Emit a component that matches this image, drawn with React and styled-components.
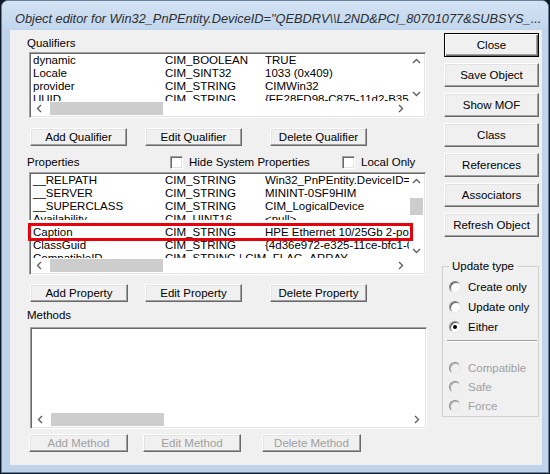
import React from "react";
import styled, { createGlobalStyle } from "styled-components";

const GlobalStyle = createGlobalStyle`
  html, body {
    margin: 0;
    padding: 0;
    background: #0f1b2b;
  }
  body {
    width: 550px;
    height: 474px;
    overflow: hidden;
    font-family: "Liberation Sans", Arial, sans-serif;
  }
`;

const qualifiers = [
  ["dynamic", "CIM_BOOLEAN", "TRUE"],
  ["Locale", "CIM_SINT32", "1033 (0x409)"],
  ["provider", "CIM_STRING", "CIMWin32"],
  ["UUID", "CIM_STRING", "{FE28FD98-C875-11d2-B352-00104BC97924}"],
];

const properties = [
  ["__RELPATH", "CIM_STRING", 'Win32_PnPEntity.DeviceID="QEBDRV\\\\L2ND"'],
  ["__SERVER", "CIM_STRING", "MININT-0SF9HIM"],
  ["__SUPERCLASS", "CIM_STRING", "CIM_LogicalDevice"],
  ["Availability", "CIM_UINT16", "<null>"],
  ["Caption", "CIM_STRING", "HPE Ethernet 10/25Gb 2-port 640SFP28 Adapter", true],
  ["ClassGuid", "CIM_STRING", "{4d36e972-e325-11ce-bfc1-08002be10318}"],
  ["CompatibleID", "CIM_STRING | CIM_FLAG_ARRAY", ""],
];

const Window = styled.div`
  margin-left: 1px;
  width: 548px;
  height: 473px;
  box-sizing: border-box;
  background: #bfd4eb;
  border: 1px solid #6a7f98;
  border-radius: 7px 7px 0 0;
  display: flex;
  flex-direction: column;
  padding: 0 6px 7px 8px;
`;

const TitleBar = styled.div`
  height: 29px;
  flex: none;
  box-sizing: border-box;
  padding: 10px 0 0 5px;
  margin: 0 -6px 0 -8px;
  padding-left: 13px;
  border-radius: 6px 6px 0 0;
  background: linear-gradient(#d3e3f4, #c1d6ed);
  font-style: italic;
  font-size: 12.8px;
  line-height: 16px;
  color: #2e2e2e;
  white-space: nowrap;
  overflow: hidden;
`;

const Client = styled.div`
  flex: 1;
  background: #f0f0f0;
  display: flex;
  padding-left: 17px;
  font-size: 11.5px;
  color: #000;
`;

const LeftPane = styled.div`
  width: 400px;
  padding-top: 6px;
  display: flex;
  flex-direction: column;
`;

const SectionLabel = styled.div`
  height: 14px;
  line-height: 14px;
  margin-top: ${(p) => p.$mt || 0}px;
`;

const ListBox = styled.div`
  margin-top: ${(p) => p.$mt}px;
  margin-left: ${(p) => p.$ml || 2}px;
  width: 397px;
  height: ${(p) => p.$h}px;
  box-sizing: border-box;
  background: #fff;
  border: 1px solid;
  border-color: #a0a0a0 #fff #fff #a0a0a0;
  box-shadow: inset 1px 1px #696969, inset -1px -1px #e3e3e3;
  padding: 1px;
  display: grid;
  grid-template-columns: ${(p) => (p.$noV ? "1fr" : "1fr 15px")};
  grid-template-rows: minmax(0, 1fr) 15px;
`;

const RowsArea = styled.div`
  min-height: 0;
  min-width: 0;
`;

const Row = styled.div`
  height: 13px;
  line-height: 13px;
  padding-left: 2px;
  display: grid;
  grid-template-columns: 132px 100px minmax(0, 1fr);
  white-space: nowrap;
  ${(p) =>
    p.$mark &&
    `
    position: relative;
    z-index: 2;
    &::before {
      content: "";
      position: absolute;
      left: -3px;
      right: -4px;
      top: -3px;
      bottom: -2px;
      border: 3px solid #e8000b;
      background: #fff;
      box-shadow: 0 -3px 0 #fff;
      z-index: -1;
    }
  `}
`;

const Cell = styled.span`
  overflow: ${(p) => (p.$clip ? "hidden" : "visible")};
`;

const VScroll = styled.div`
  position: relative;
  z-index: 1;
  background: #fff;
  display: flex;
  flex-direction: column;
`;

const HScroll = styled.div`
  position: relative;
  z-index: 3;
  background: #fff;
  display: flex;
  align-items: stretch;
`;

const ScrollBtn = styled.div`
  width: ${(p) => p.$w || 15}px;
  height: 15px;
  flex: none;
  display: flex;
  align-items: center;
  justify-content: center;
`;

const Track = styled.div`
  flex: 1;
  display: flex;
  flex-direction: ${(p) => (p.$vertical ? "column" : "row")};
`;

const HThumb = styled.div`
  margin: 1px 0 1px 2px;
  width: 113px;
  background: #cdcdcd;
`;

const VThumb = styled.div`
  margin: 9px 1px 0 1px;
  height: 17px;
  background: #cdcdcd;
`;

const Corner = styled.div`
  position: relative;
  z-index: 3;
  background: #fff;
`;

const ButtonRow = styled.div`
  display: flex;
  margin-top: ${(p) => p.$mt}px;
`;

const PushButton = styled.div`
  margin-left: ${(p) => p.$ml || 0}px;
  width: ${(p) => p.$w || 98}px;
  height: ${(p) => p.$h || 18}px;
  flex: none;
  box-sizing: border-box;
  background: #f0f0f0;
  border: 1px solid;
  border-color: ${(p) => (p.$default ? "#000" : "#fff #696969 #696969 #fff")};
  box-shadow: ${(p) =>
    p.$default
      ? "inset 1px 1px #fff, inset -1px -1px #696969, inset -2px -2px #a0a0a0"
      : "inset -1px -1px #a0a0a0, inset 1px 1px #e3e3e3"};
  display: flex;
  align-items: center;
  justify-content: center;
  padding-bottom: 1px;
  color: ${(p) => (p.$disabled ? "#a0a0a0" : "#000")};
  white-space: nowrap;
`;

const PropHeader = styled.div`
  display: flex;
  align-items: center;
  height: 14px;
  margin-top: 9px;
`;

const CheckItem = styled.div`
  width: ${(p) => p.$w || "auto"};
  flex: none;
  display: flex;
  align-items: center;
  gap: 6px;
  line-height: 14px;
`;

const CheckBox = styled.span`
  width: 13px;
  height: 13px;
  box-sizing: border-box;
  background: #fff;
  border: 1px solid;
  border-color: #a0a0a0 #fff #fff #a0a0a0;
  box-shadow: inset 1px 1px #696969, inset -1px -1px #e3e3e3;
`;

const SideBar = styled.div`
  margin-left: 15px;
  width: 97px;
  padding-top: 3px;
  display: flex;
  flex-direction: column;
  align-items: flex-start;
`;

const SideButtons = styled.div`
  margin-left: 2px;
  display: flex;
  flex-direction: column;
  gap: 6px;
`;

const GroupBox = styled.fieldset`
  margin: 22px 0 0 0;
  width: 97px;
  box-sizing: border-box;
  padding: 0 0 1px 6px;
  border: 1px solid #d0d0d0;
  min-inline-size: 0;
`;

const Legend = styled.legend`
  padding: 0 3px;
  font-size: 11.5px;
  line-height: 14px;
`;

const RadioRow = styled.div`
  height: ${(p) => p.$h}px;
  margin-top: ${(p) => p.$mt || 0}px;
  display: flex;
  align-items: center;
  gap: 7px;
  color: ${(p) => (p.$disabled ? "#a0a0a0" : "#000")};
`;

const RadioCircle = styled.span`
  width: 12px;
  height: 12px;
  box-sizing: border-box;
  border-radius: 50%;
  border: 1px solid;
  border-color: #8a8a8a #e8e8e8 #e8e8e8 #8a8a8a;
  background: ${(p) => (p.$disabled ? "#f0f0f0" : "#fff")};
  box-shadow: inset 1px 1px ${(p) => (p.$disabled ? "#b8b8b8" : "#5a5a5a")};
  display: flex;
  align-items: center;
  justify-content: center;
  &::after {
    content: "";
    width: 4px;
    height: 4px;
    border-radius: 50%;
    background: ${(p) => (p.$checked ? "#000" : "transparent")};
  }
`;

const Separator = styled.div`
  margin: 3px 0 16px -2px;
  width: 90px;
  height: 1px;
  border-bottom: 1px solid #fff;
  background: #a0a0a0;
`;

const rotations = { up: 0, right: 90, down: 180, left: 270 };

function Arrow({ dir }) {
  return (
    <svg width="9" height="9" viewBox="0 0 9 9">
      <path
        d="M1 6 L4.5 2.5 L8 6"
        fill="none"
        stroke="#606060"
        strokeWidth="1.4"
        transform={`rotate(${rotations[dir]} 4.5 4.5)`}
      />
    </svg>
  );
}

function List({ rows, mt, h, ml, noV, thumbV }) {
  return (
    <ListBox $mt={mt} $h={h} $ml={ml} $noV={noV}>
      <RowsArea>
        {rows.map(([name, type, value, mark]) => (
          <Row key={name} $mark={mark}>
            <Cell>{name}</Cell>
            <Cell>{type}</Cell>
            <Cell $clip>{value}</Cell>
          </Row>
        ))}
      </RowsArea>
      {!noV && (
        <VScroll>
          <ScrollBtn>
            <Arrow dir="up" />
          </ScrollBtn>
          <Track $vertical>{thumbV && <VThumb />}</Track>
          <ScrollBtn>
            <Arrow dir="down" />
          </ScrollBtn>
        </VScroll>
      )}
      <HScroll>
        <ScrollBtn $w={17}>
          <Arrow dir="left" />
        </ScrollBtn>
        <Track>
          <HThumb />
        </Track>
        <ScrollBtn $w={17}>
          <Arrow dir="right" />
        </ScrollBtn>
      </HScroll>
      {!noV && <Corner />}
    </ListBox>
  );
}

const sideButtons = [
  "Close",
  "Save Object",
  "Show MOF",
  "Class",
  "References",
  "Associators",
  "Refresh Object",
];

export default function App() {
  return (
    <>
      <GlobalStyle />
      <Window>
        <TitleBar>
          Object editor for Win32_PnPEntity.DeviceID="QEBDRV\\L2ND&amp;PCI_80701077&amp;SUBSYS_...
        </TitleBar>
        <Client>
          <LeftPane>
            <SectionLabel>Qualifiers</SectionLabel>
            <List rows={qualifiers} mt={2} h={66} />
            <ButtonRow $mt={10}>
              <PushButton $ml={3} $w={97}>Add Qualifier</PushButton>
              <PushButton $ml={18} $w={97}>Edit Qualifier</PushButton>
              <PushButton $ml={28} $w={97}>Delete Qualifier</PushButton>
            </ButtonRow>

            <PropHeader>
              <CheckItem $w="143px">Properties</CheckItem>
              <CheckItem $w="172px">
                <CheckBox />
                Hide System Properties
              </CheckItem>
              <CheckItem>
                <CheckBox />
                Local Only
              </CheckItem>
            </PropHeader>
            <List rows={properties} mt={3} h={103} thumbV />
            <ButtonRow $mt={9}>
              <PushButton $ml={3}>Add Property</PushButton>
              <PushButton $ml={17} $w={97}>Edit Property</PushButton>
              <PushButton $ml={28} $w={97}>Delete Property</PushButton>
            </ButtonRow>

            <SectionLabel $mt={6}>Methods</SectionLabel>
            <List rows={[]} mt={5} h={102} ml={3} noV />
            <ButtonRow $mt={5}>
              <PushButton $ml={2} $w={99} $disabled>Add Method</PushButton>
              <PushButton $ml={15} $disabled>Edit Method</PushButton>
              <PushButton $ml={21} $w={99} $disabled>Delete Method</PushButton>
            </ButtonRow>
          </LeftPane>

          <SideBar>
            <SideButtons>
              {sideButtons.map((label, i) => (
                <PushButton key={label} $w={95} $h={24} $default={i === 0}>
                  {label}
                </PushButton>
              ))}
            </SideButtons>
            <GroupBox>
              <Legend>Update type</Legend>
              <RadioRow $h={20} $mt={4}>
                <RadioCircle />
                Create only
              </RadioRow>
              <RadioRow $h={20}>
                <RadioCircle />
                Update only
              </RadioRow>
              <RadioRow $h={20}>
                <RadioCircle $checked />
                Either
              </RadioRow>
              <Separator />
              <RadioRow $h={19} $disabled>
                <RadioCircle $disabled />
                Compatible
              </RadioRow>
              <RadioRow $h={19} $disabled>
                <RadioCircle $disabled />
                Safe
              </RadioRow>
              <RadioRow $h={19} $disabled>
                <RadioCircle $disabled />
                Force
              </RadioRow>
            </GroupBox>
          </SideBar>
        </Client>
      </Window>
    </>
  );
}
